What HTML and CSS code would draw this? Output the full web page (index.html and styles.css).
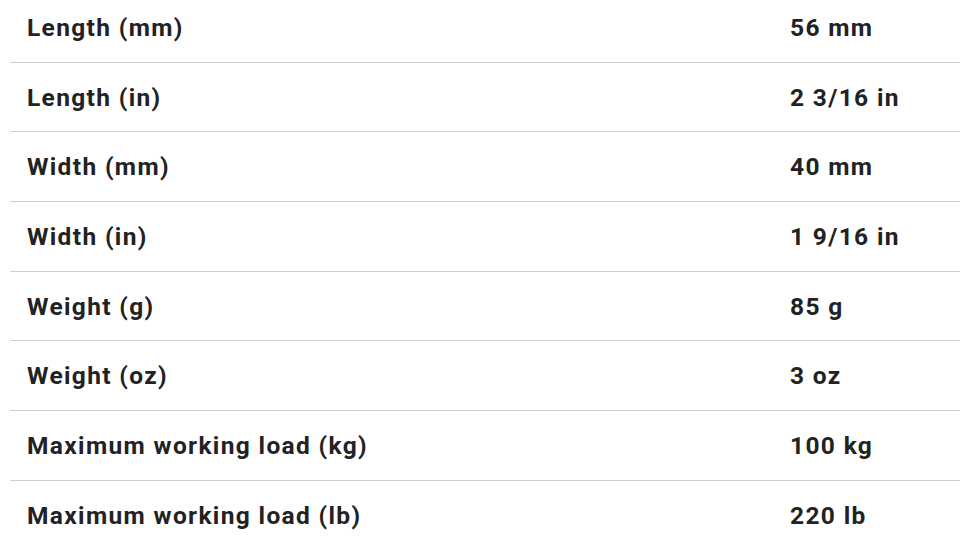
FILE: index.html
```html
<!DOCTYPE html>
<html>
<head>
<meta charset="utf-8">
<link rel="stylesheet" href="styles.css">
</head>
<body>
<div class="specs">
  <div class="row"><div class="label">Length (mm)</div><div class="value">56 mm</div></div>
  <div class="row"><div class="label">Length (in)</div><div class="value">2 3/16 in</div></div>
  <div class="row"><div class="label">Width (mm)</div><div class="value">40 mm</div></div>
  <div class="row"><div class="label">Width (in)</div><div class="value">1 9/16 in</div></div>
  <div class="row"><div class="label">Weight (g)</div><div class="value">85 g</div></div>
  <div class="row"><div class="label">Weight (oz)</div><div class="value">3 oz</div></div>
  <div class="row"><div class="label">Maximum working load (kg)</div><div class="value">100 kg</div></div>
  <div class="row"><div class="label">Maximum working load (lb)</div><div class="value">220 lb</div></div>
</div>
</body>
</html>
```

FILE: styles.css
```css
html, body {
  margin: 0;
  padding: 0;
  background: #ffffff;
}
body {
  font-family: Roboto, "Liberation Sans", sans-serif;
  color: #222222;
  overflow: hidden;
}
.specs {
  margin-left: 10px;
  margin-top: -7px;
}
.row {
  display: grid;
  grid-template-columns: 780px 1fr;
  align-items: center;
  height: 69.7px;
  box-sizing: border-box;
  border-bottom: 1.5px solid #cfcfcf;
  font-size: 24.5px;
  font-weight: 700;
  letter-spacing: 1.35px;
}
.row:last-child {
  border-bottom: none;
}
.label {
  padding-left: 17px;
}
```
